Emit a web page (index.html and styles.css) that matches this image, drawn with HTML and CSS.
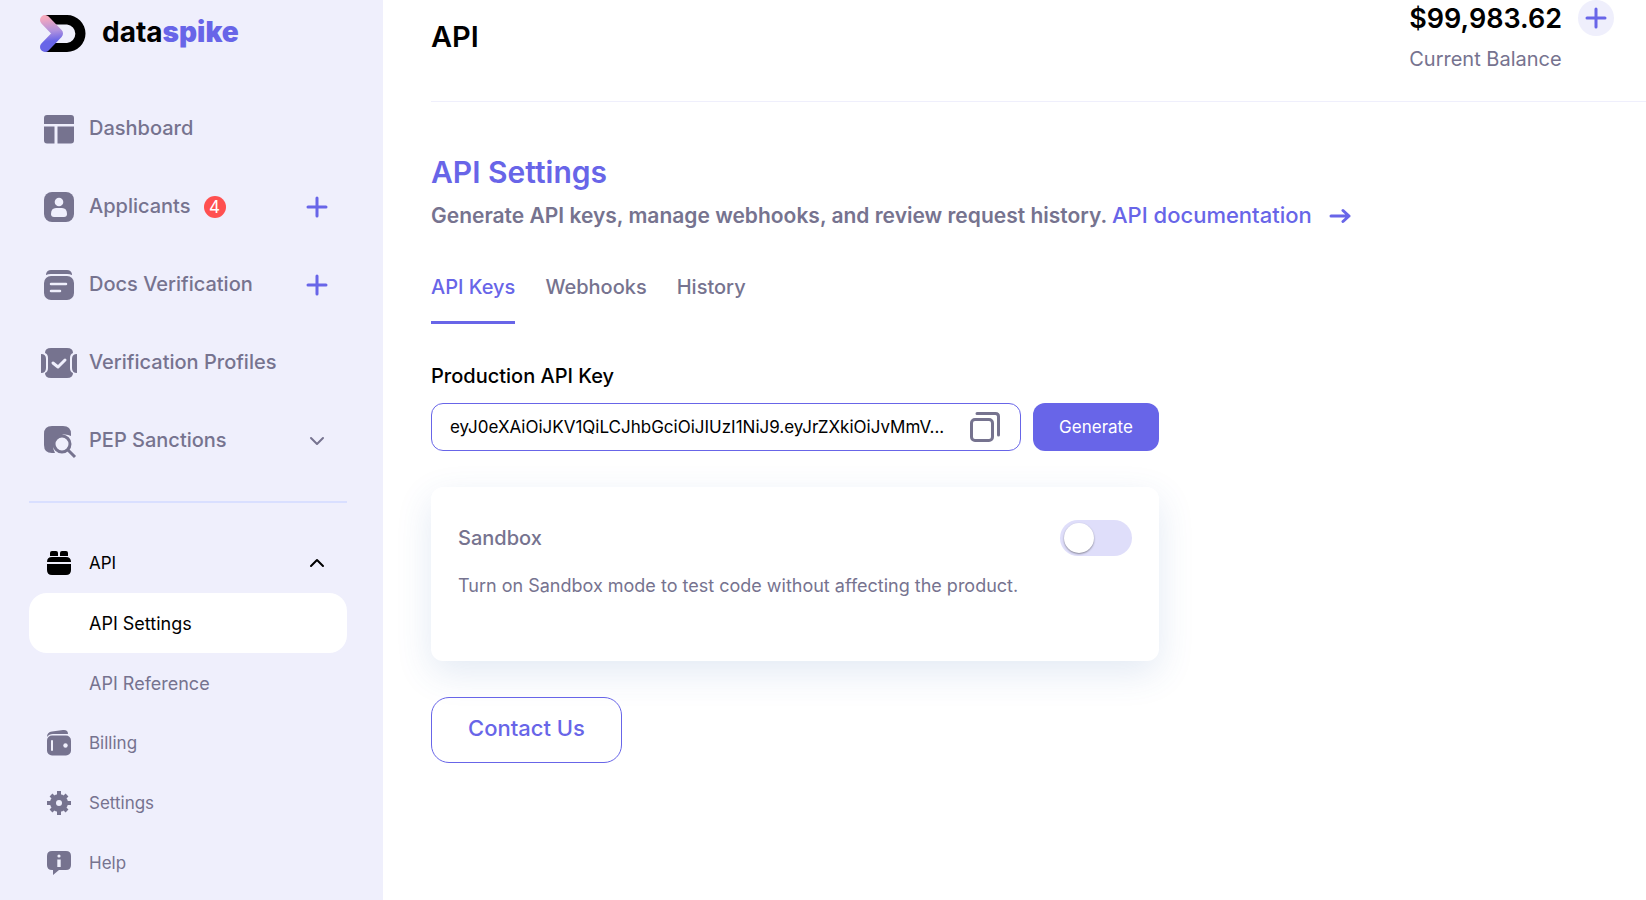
FILE: index.html
```html
<!DOCTYPE html>
<html lang="en">
<head>
<meta charset="utf-8">
<meta name="viewport" content="width=device-width, initial-scale=1">
<title>API Settings – dataspike</title>
<link rel="stylesheet" href="styles.css">
</head>
<body>
<div class="app">
  <aside class="sidebar">
    <a class="logo" href="#">
      <svg width="46" height="38" viewBox="0 0 46 38" aria-hidden="true">
        <defs><linearGradient id="spike" gradientUnits="userSpaceOnUse" x1="4" y1="0" x2="8" y2="37"><stop offset="0.08" stop-color="#f5a9bd"/><stop offset="0.45" stop-color="#b091de"/><stop offset="0.72" stop-color="#6865e8"/></linearGradient></defs>
        <path d="M5 0H27a18.500 18.500 0 0 1 0 37H5L14 28H27a9.300 9.300 0 0 0 0-18.500H14Z" fill="#000"/>
        <path d="M5 5L18 18.500L5 32" fill="none" stroke="url(#spike)" stroke-width="10" stroke-linecap="round" stroke-linejoin="round"/>
      </svg>
      <span class="brand">data<b>spike</b></span>
    </a>
    <nav class="nav primary">
      <div class="item">
        <a href="#"><svg class="icon" width="36" height="36" viewBox="0 0 36 36"><path d="M6 4H30a3 3 0 0 1 3 3V13H3V7a3 3 0 0 1 3-3ZM3 15.500H13.500V32.500H6a3 3 0 0 1-3-3ZM16.500 15.500H33V29.500a3 3 0 0 1-3 3H16.500Z"/></svg>Dashboard</a>
      </div>
      <div class="item">
        <a href="#"><svg class="icon" width="36" height="36" viewBox="0 0 36 36"><rect x="3" y="3" width="30" height="30" rx="8"/><circle class="cut" cx="18" cy="13" r="4.300"/><path class="cut" d="M10 25q0-6 5-6h6q5 0 5 6 0 3-3 3H13q-3 0-3-3Z"/></svg>Applicants</a><span class="badge">4</span>
        <button class="tool" aria-label="Add applicant"><svg width="24" height="24" viewBox="0 0 24 24"><path d="M12 3v18M3 12h18"/></svg></button>
      </div>
      <div class="item">
        <a href="#"><svg class="icon" width="36" height="36" viewBox="0 0 36 36"><path d="M5 7q1-4 5-4H26q4 0 5 4v1q-2-1-5-1H10q-3 0-5 1Z"/><rect x="3" y="9" width="30" height="24" rx="7"/><path class="line docs" d="M10 17H25M10 24H19"/></svg>Docs Verification</a>
        <button class="tool" aria-label="Add document"><svg width="24" height="24" viewBox="0 0 24 24"><path d="M12 3v18M3 12h18"/></svg></button>
      </div>
      <div class="item">
        <a href="#"><svg class="icon" width="36" height="36" viewBox="0 0 36 36"><path d="M10 3H26q6 0 6 5Q29 9 29 13V23q0 4 3 5 0 5-6 5H10q-6 0-6-5 3-1 3-5V13Q7 9 4 8 4 3 10 3ZM0 9q5 0 5 5v9q0 5-5 5ZM36 9q-5 0-5 5v9q0 5 5 5Z"/><path class="line" d="M12 18l5 4 7-7"/></svg>Verification Profiles</a>
      </div>
      <div class="item">
        <a href="#"><svg class="icon" width="36" height="36" viewBox="0 0 36 36"><path d="M11 3H22q8 0 8 8v2A12 12 0 0 0 14 30H11q-8 0-8-8V11q0-8 8-8Z"/><circle class="lens" cx="21" cy="21" r="8"/><path class="lens" d="M27 27l7 7"/></svg>PEP Sanctions</a>
        <button class="tool muted" aria-label="Expand PEP Sanctions"><svg width="24" height="24" viewBox="0 0 24 24"><path d="M6 9l6 6 6-6"/></svg></button>
      </div>
    </nav>
    <nav class="nav small">
      <div class="item current">
        <a href="#"><svg class="icon" width="36" height="36" viewBox="0 0 36 36"><path d="M9 11V8q0-2 2-2h4q2 0 2 2v3ZM19 11V8q0-2 2-2h4q2 0 2 2v3ZM6 17q0-5 5-5H25q5 0 5 5ZM6 19H30v6q0 5-5 5H11q-5 0-5-5Z"/></svg>API</a>
        <button class="tool dark" aria-label="Collapse API"><svg width="24" height="24" viewBox="0 0 24 24"><path d="M6 15l6-6 6 6"/></svg></button>
      </div>
      <div class="item sub selected"><a href="#">API Settings</a></div>
      <div class="item sub"><a href="#">API Reference</a></div>
      <div class="item">
        <a href="#"><svg class="icon" width="36" height="36" viewBox="0 0 36 36"><path d="M6 12q0-5 5-5.500L22 5q5-.5 5 4H12q-4 0-6 3Z"/><rect x="6" y="10.500" width="24" height="20" rx="5"/><circle class="cut" cx="24.500" cy="20.500" r="2.200"/><path class="line thin" d="M11 16V25"/></svg>Billing</a>
      </div>
      <div class="item">
        <a href="#"><svg class="icon" width="36" height="36" viewBox="0 0 36 36"><circle cx="18" cy="18" r="9"/><path class="teeth" d="M18 6V30M6 18H30M10 10l16 16M26 10L10 26"/><circle class="cut" cx="18" cy="18" r="3"/></svg>Settings</a>
      </div>
      <div class="item">
        <a href="#"><svg class="icon" width="36" height="36" viewBox="0 0 36 36"><path d="M11 6H25q5 0 5 5V20q0 5-5 5H18l-6 5V25H11q-5 0-5-5V11q0-5 5-5Z"/><circle class="cut" cx="18" cy="11" r="1.600"/><path class="cut" d="M16.300 14.500h3.400V22h-3.400Z"/></svg>Help</a>
      </div>
    </nav>
  </aside>
  <main class="main">
    <header class="top">
      <h1>API</h1>
      <div class="balance">
        <div><strong>$99,983.62</strong><span>Current Balance</span></div>
        <button class="topup" aria-label="Add funds"><svg width="24" height="24" viewBox="0 0 24 24"><path d="M12 3v18M3 12h18"/></svg></button>
      </div>
    </header>
    <h2>API Settings</h2>
    <p class="lead">Generate API keys, manage webhooks, and review request history. <a href="#">API documentation<svg width="22" height="16" viewBox="0 0 22 16"><path d="M2 8H20M14 2.500L20 8l-6 5.500"/></svg></a></p>
    <nav class="tabs"><a class="active" href="#">API Keys</a><a href="#">Webhooks</a><a href="#">History</a></nav>
    <section class="panel">
      <label for="key">Production API Key</label>
      <div class="row">
        <div class="field">
          <input id="key" type="text" readonly value="eyJ0eXAiOiJKV1QiLCJhbGciOiJIUzI1NiJ9.eyJrZXkiOiJvMmV...">
          <button aria-label="Copy key"><svg width="32" height="32" viewBox="0 0 32 32"><rect x="2.500" y="8.500" width="21" height="21" rx="3.500"/><path d="M8 2.500H26.500q3 0 3 3V24"/></svg></button>
        </div>
        <button class="generate">Generate</button>
      </div>
      <div class="card">
        <div class="card-head"><label for="sandbox">Sandbox</label><input class="switch" id="sandbox" type="checkbox" role="switch"></div>
        <p>Turn on Sandbox mode to test code without affecting the product.</p>
      </div>
      <button class="contact">Contact Us</button>
    </section>
  </main>
</div>
</body>
</html>
```

FILE: styles.css
```css
* { box-sizing: border-box; }
body { margin: 0; background: #fff; color: #000; font-family: "Inter", "Liberation Sans", sans-serif; }
button, input { font: inherit; }
button { padding: 0; border: 0; background: none; cursor: pointer; }
a { color: inherit; text-decoration: none; }
svg { display: block; flex: none; fill: none; stroke: none; }
h1, h2, p { margin: 0; }

.app { display: grid; grid-template-columns: 383px 1fr; height: 100vh; overflow: hidden; }
.sidebar { background: #efeffc; padding: 0 36px 0 29px; overflow: hidden; }
.logo { display: flex; align-items: center; gap: 16px; height: 68px; padding-left: 11px; }
.brand { padding-bottom: 4px; font-size: 28px; line-height: 32px; font-weight: 700; }
.brand b { color: #6865e8; }
.nav { padding: 21px 0 22px; border-bottom: 2px solid #d9dfff; font-size: 20px; font-weight: 500; color: #76738f; }
.item { display: flex; align-items: center; height: 78px; padding: 0 18px 0 12px; }
.item a { display: flex; align-items: center; gap: 12px; white-space: nowrap; }
.primary .icon, .primary .tool, .primary .badge { margin-top: 2px; }
.icon { fill: currentColor; }
.icon .cut { fill: #efeffc; }
.icon .line { fill: none; stroke: #efeffc; stroke-width: 3; stroke-linecap: round; stroke-linejoin: round; }
.icon .docs { stroke-width: 2.5; }
.icon .thin { stroke-width: 2; }
.icon .lens { fill: none; stroke: currentColor; stroke-width: 3; }
.icon .teeth { stroke: currentColor; stroke-width: 4; }
.badge { width: 22px; height: 22px; margin-left: 13px; border-radius: 50%; background: #ff5050; color: #fff; font-size: 17px; line-height: 22px; text-align: center; font-weight: 400; }
.item .tool { margin-left: auto; }
.tool svg, .topup svg { stroke: #6865e8; stroke-width: 3; stroke-linecap: round; stroke-linejoin: round; }
.tool.muted svg { stroke: #76738f; stroke-width: 2; }
.tool.dark svg { stroke: #000; stroke-width: 2; }
.small { padding: 30px 0 0; border: 0; font-size: 17px; font-weight: 400; }
.small .item { height: 60px; }
.small .sub { padding-left: 60px; font-size: 18px; }
.small .selected { background: #fff; border-radius: 18px; color: #000; }
.current { color: #000; }

.main { min-width: 0; padding-left: 48px; }
.top { display: flex; justify-content: space-between; height: 102px; border-bottom: 1px solid #efeffc; padding-right: 32px; }
h1 { padding-top: 19px; font-size: 29px; line-height: 36px; font-weight: 600; }
.balance { display: flex; align-items: flex-start; gap: 16px; }
.balance strong { display: block; padding-top: 1px; font-size: 27px; line-height: 36px; font-weight: 600; }
.balance span { display: block; margin-top: 6px; font-size: 20px; line-height: 32px; color: #76738f; }
.topup { display: grid; place-items: center; width: 36px; height: 36px; border-radius: 50%; background: #efeffc; }
h2 { margin-top: 52px; font-size: 30px; line-height: 36px; font-weight: 600; color: #6865e8; }
.lead { margin-top: 9px; font-size: 21px; line-height: 32px; font-weight: 600; color: #76738f; }
.lead a { color: #6865e8; font-size: 22px; font-weight: 500; }
.lead svg { display: inline-block; margin-left: 17px; vertical-align: -1px; stroke: #6865e8; stroke-width: 3; stroke-linecap: round; stroke-linejoin: round; }
.tabs { display: flex; gap: 30px; margin-top: 39px; font-size: 20px; line-height: 32px; font-weight: 500; color: #76738f; }
.tabs a { padding-bottom: 18px; border-bottom: 3px solid transparent; }
.tabs .active { color: #6865e8; border-color: #6865e8; }
.panel { max-width: 728px; margin-top: 36px; }
.panel > label { display: block; font-size: 20px; line-height: 32px; font-weight: 500; }
.row { display: flex; gap: 12px; margin-top: 11px; }
.field { display: flex; flex: 1; min-width: 0; height: 48px; align-items: center; padding: 0 19px 0 18px; border: 1px solid #6865e8; border-radius: 12px; }
.field input { flex: 1; min-width: 0; padding: 0; border: 0; outline: 0; background: none; color: #000; font-size: 17px; text-overflow: ellipsis; }
.field svg { stroke: #76738f; stroke-width: 3; stroke-linecap: round; }
.generate { width: 126px; border-radius: 12px; background: #6865e8; color: #fff; font-size: 17px; }
.card { margin-top: 36px; min-height: 174px; padding: 33px 27px; border-radius: 12px; background: #fff; box-shadow: 0 12px 36px rgba(60, 105, 180, 0.14); color: #76738f; }
.card-head { display: flex; align-items: center; justify-content: space-between; font-size: 20px; line-height: 36px; font-weight: 500; }
.card p { margin-top: 16px; font-size: 18px; line-height: 28px; }
.switch { appearance: none; display: flex; align-items: center; width: 72px; height: 36px; margin: 0; padding: 0 4px; border-radius: 18px; background: #dfdefa; }
.switch::before { content: ""; width: 30px; height: 30px; border-radius: 50%; background: #fff; box-shadow: 0 1px 2px rgba(0, 0, 0, 0.4); }
.switch:checked { background: #6865e8; justify-content: flex-end; }
.contact { margin-top: 36px; height: 66px; padding: 0 36px 4px; border: 1px solid #6865e8; border-radius: 18px; color: #6865e8; font-size: 22px; font-weight: 500; }
```
